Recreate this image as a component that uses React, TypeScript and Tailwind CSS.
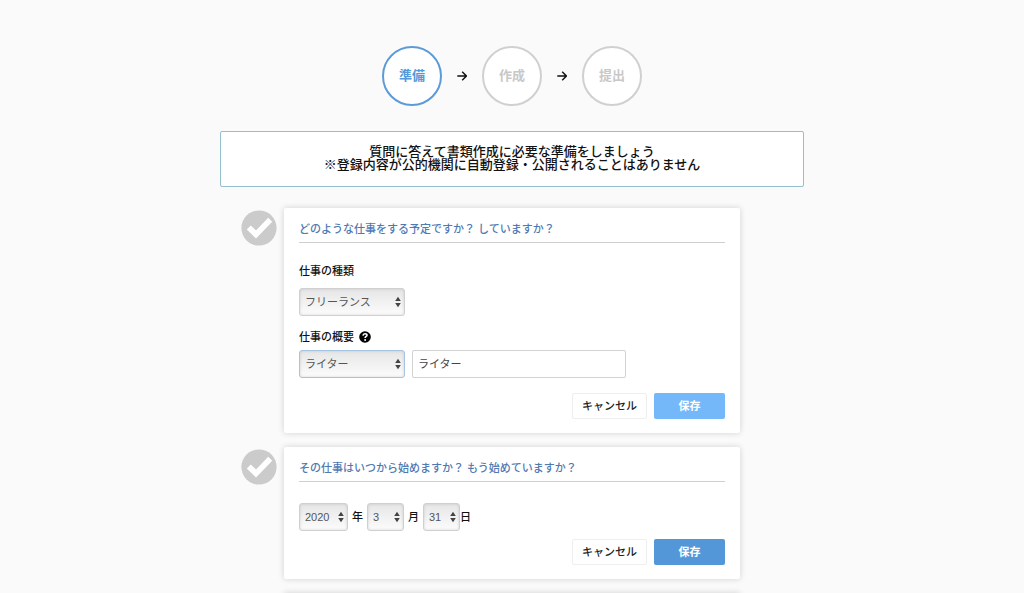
import { useState } from 'react';
import type { ReactNode, SelectHTMLAttributes } from 'react';

const steps = ['準備', '作成', '提出'];

const Arrow = () => (
  <svg viewBox="0 0 10 10" className="w-2.5 h-2.5" fill="none" stroke="#111" strokeWidth="1.4">
    <path d="M0.3 5H9.2M5.2 0.8L9.4 5L5.2 9.2" />
  </svg>
);

const CheckBadge = () => (
  <svg viewBox="0 0 36 36" className="mt-0.5 w-9 h-9 shrink-0">
    <circle cx="18" cy="18" r="17.6" fill="#cbcbcb" />
    <path d="M5.8 19.4L9.8 15.4L15 20.6L27.2 7.8L31.2 11.8L15 28.6Z" fill="#fff" />
  </svg>
);

const HelpIcon = () => (
  <svg viewBox="0 0 12 12" className="w-3 h-3">
    <circle cx="6" cy="6" r="5.8" fill="#000" />
    <path d="M4 4.6C4.1 3.4 4.9 2.8 6 2.8C7.2 2.8 8 3.4 8 4.3C8 5.5 6.1 5.5 6.1 7.1" fill="none" stroke="#fff" strokeWidth="1.6" />
    <circle cx="6.1" cy="9" r="1" fill="#fff" />
  </svg>
);

type SelectProps = SelectHTMLAttributes<HTMLSelectElement> & { options: string[]; width: string; border?: string };

const Select = ({ options, width, border = 'border-[#d0d0d0]', ...rest }: SelectProps) => (
  <div className={`relative h-7 ${width}`}>
    <select
      {...rest}
      className={`block w-full h-full appearance-none rounded-[3px] border ${border} bg-linear-to-b from-[#e6e6e6] to-[#fcfcfc] pl-[5px] pr-3 text-[11px] text-[#555] shadow-[inset_0_0_3px_rgba(0,0,0,0.15)] outline-none`}
    >
      {options.map((o) => (
        <option key={o}>{o}</option>
      ))}
    </select>
    <svg viewBox="0 0 6 12" className="pointer-events-none absolute right-1 top-2 w-1.5 h-3" fill="#444">
      <path d="M3 0.8L5.8 5H0.2ZM3 11.2L0.2 7H5.8Z" />
    </svg>
  </div>
);

const Question = ({ title, children }: { title: string; children?: ReactNode }) => (
  <div className="flex items-start gap-[7px]">
    <CheckBadge />
    <section className="flex-1 rounded-[2px] bg-white px-[15px] pb-3.5 shadow-[0_0_6px_rgba(0,0,0,0.17)]">
      <h2 className="border-b border-[#cfcfcf] pt-[13px] pb-[5px] text-[11px] leading-4 font-medium text-[#5079b2]">{title}</h2>
      {children}
    </section>
  </div>
);

const Actions = ({ saveColor }: { saveColor: string }) => (
  <div className="flex justify-end gap-[7px]">
    <button type="button" className="h-[26px] w-[75px] rounded-[2px] border border-[#eee] bg-white text-[11px] font-medium text-[#222]">
      キャンセル
    </button>
    <button type="submit" className={`h-[26px] w-[71px] rounded-[2px] ${saveColor} text-[11px] font-bold text-white`}>
      保存
    </button>
  </div>
);

const App = () => {
  const [summary, setSummary] = useState('ライター');

  return (
    <main className="h-screen overflow-hidden bg-[#fafafa] px-4 pt-[46px] font-['Liberation_Sans','Noto_Sans_CJK_JP',sans-serif] text-[#111]">
      {/* Steps */}
      <ol className="flex items-center justify-center">
        {steps.map((step, i) => (
          <li key={step} className="flex items-center">
            {i > 0 && (
              <span className="flex w-10 justify-center">
                <Arrow />
              </span>
            )}
            <span
              className={`flex h-15 w-15 items-center justify-center rounded-full border-2 bg-white text-[13px] font-bold ${
                i === 0 ? 'border-[#5b9bd8] text-[#5499d9]' : 'border-[#d0d0d0] text-[#c8c8c8]'
              }`}
            >
              {step}
            </span>
          </li>
        ))}
      </ol>

      <div className="mx-auto mt-[25px] max-w-[584px]">
        <p className="rounded-[2px] border border-[#94bfcc] bg-white pt-[13px] pb-[15px] text-center text-[13px] leading-[13px] font-medium">
          質問に答えて書類作成に必要な準備をしましょう
          <br />
          ※登録内容が公的機関に自動登録・公開されることはありません
        </p>

        {/* Questions */}
        <div className="mt-[21px] flex flex-col gap-3.5 pr-16 pl-[21px]">
          <Question title="どのような仕事をする予定ですか？ していますか？">
            <form onSubmit={(e) => e.preventDefault()}>
              <label htmlFor="kind" className="mt-5 mb-[9px] block text-[11px] leading-4 font-medium">
                仕事の種類
              </label>
              <Select id="kind" options={['フリーランス', '個人事業主']} width="w-[106px]" />
              <div className="mt-[13px] mb-[5px] flex items-center gap-[5px]">
                <label htmlFor="summary" className="text-[11px] leading-4 font-medium">
                  仕事の概要
                </label>
                <HelpIcon />
              </div>
              <div className="mb-[15px] flex gap-[7px]">
                <Select id="summary" options={['ライター', 'デザイナー']} width="w-[106px]" border="border-[#a5c4df]" />
                <input
                  type="text"
                  aria-label="仕事の概要"
                  value={summary}
                  onChange={(e) => setSummary(e.target.value)}
                  className="h-7 w-[214px] rounded-[2px] border border-[#d2d2d2] bg-white px-[5px] pb-0.5 text-[11px] text-[#444] outline-none"
                />
              </div>
              <Actions saveColor="bg-[#74b8f9]" />
            </form>
          </Question>

          <Question title="その仕事はいつから始めますか？ もう始めていますか？">
            <form onSubmit={(e) => e.preventDefault()}>
              <div className="mt-[21px] mb-2 flex items-center text-[11px] font-medium">
                <Select id="year" aria-label="年" options={['2020', '2021']} width="w-[49px]" />
                <label htmlFor="year" className="px-1">年</label>
                <Select id="month" aria-label="月" options={['3', '4']} width="w-[37px]" />
                <label htmlFor="month" className="px-1">月</label>
                <Select id="day" aria-label="日" options={['31', '30']} width="w-[37px]" />
                <label htmlFor="day">日</label>
              </div>
              <Actions saveColor="bg-[#5397d9]" />
            </form>
          </Question>

          <Question title="" />
        </div>
      </div>
    </main>
  );
};

export default App;
